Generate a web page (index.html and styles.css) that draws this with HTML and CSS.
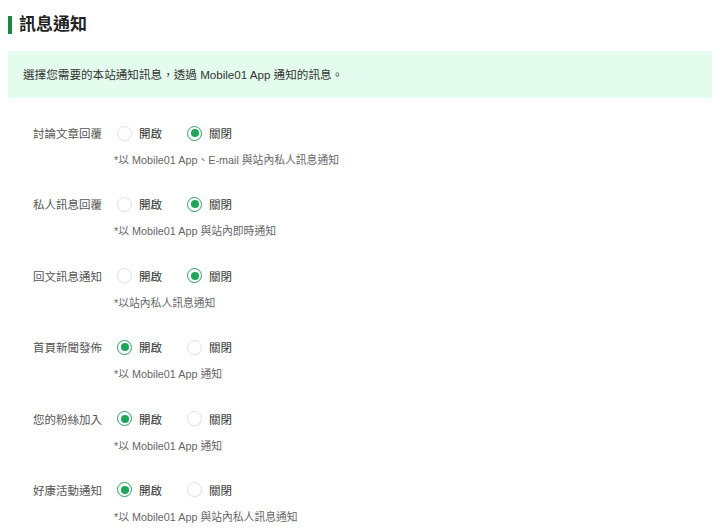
FILE: index.html
```html
<!DOCTYPE html>
<html lang="zh-Hant">
<head>
<meta charset="utf-8">
<title>訊息通知</title>
<link rel="stylesheet" href="styles.css">
</head>
<body>
<div class="page">
  <h1 class="title"><span class="title-bar"></span>訊息通知</h1>
  <div class="info">選擇您需要的本站通知訊息，透過 Mobile01 App 通知的訊息。</div>
  <div class="settings">
    <div class="setting">
      <div class="setting-main">
        <span class="setting-label">討論文章回覆</span>
        <label class="option"><span class="radio"></span>開啟</label>
        <label class="option"><span class="radio checked"></span>關閉</label>
      </div>
      <div class="setting-note">*以 Mobile01 App、E-mail 與站內私人訊息通知</div>
    </div>
    <div class="setting">
      <div class="setting-main">
        <span class="setting-label">私人訊息回覆</span>
        <label class="option"><span class="radio"></span>開啟</label>
        <label class="option"><span class="radio checked"></span>關閉</label>
      </div>
      <div class="setting-note">*以 Mobile01 App 與站內即時通知</div>
    </div>
    <div class="setting">
      <div class="setting-main">
        <span class="setting-label">回文訊息通知</span>
        <label class="option"><span class="radio"></span>開啟</label>
        <label class="option"><span class="radio checked"></span>關閉</label>
      </div>
      <div class="setting-note">*以站內私人訊息通知</div>
    </div>
    <div class="setting">
      <div class="setting-main">
        <span class="setting-label">首頁新聞發佈</span>
        <label class="option"><span class="radio checked"></span>開啟</label>
        <label class="option"><span class="radio"></span>關閉</label>
      </div>
      <div class="setting-note">*以 Mobile01 App 通知</div>
    </div>
    <div class="setting">
      <div class="setting-main">
        <span class="setting-label">您的粉絲加入</span>
        <label class="option"><span class="radio checked"></span>開啟</label>
        <label class="option"><span class="radio"></span>關閉</label>
      </div>
      <div class="setting-note">*以 Mobile01 App 通知</div>
    </div>
    <div class="setting">
      <div class="setting-main">
        <span class="setting-label">好康活動通知</span>
        <label class="option"><span class="radio checked"></span>開啟</label>
        <label class="option"><span class="radio"></span>關閉</label>
      </div>
      <div class="setting-note">*以 Mobile01 App 與站內私人訊息通知</div>
    </div>
  </div>
</div>
</body>
</html>
```

FILE: styles.css
```css
html, body {
  margin: 0;
  padding: 0;
  background: #fff;
}

body {
  font-family: "Liberation Sans", "Noto Sans CJK TC", sans-serif;
  color: #333;
}

.page {
  padding: 14px 8px 0;
}

.title {
  display: flex;
  align-items: center;
  margin: 0;
  height: 22px;
  font-size: 17px;
  line-height: 22px;
  font-weight: bold;
  color: #222;
}

.title-bar {
  width: 4px;
  height: 18px;
  background: #1d8543;
  margin-right: 7px;
}

.info {
  margin-top: 15px;
  background: #e3fced;
  padding: 15px 15px;
  font-size: 11.6px;
  line-height: 17px;
  color: #333;
}

.settings {
  display: flex;
  flex-direction: column;
  gap: 25.4px;
  margin-top: 25px;
  padding-left: 25px;
}

.setting-main {
  display: flex;
  align-items: center;
  height: 20px;
  font-size: 11.5px;
}

.setting-label {
  width: 84px;
  color: #555;
}

.option {
  display: flex;
  align-items: center;
  gap: 7px;
  margin-right: 25px;
  color: #333;
}

.radio {
  box-sizing: border-box;
  width: 15px;
  height: 15px;
  border-radius: 50%;
  border: 1px solid #e2e2e2;
  background: #fff;
  box-shadow: 0 1px 1px rgba(0, 0, 0, 0.04);
  display: flex;
  align-items: center;
  justify-content: center;
}

.radio.checked {
  border-color: #2aa361;
}

.radio.checked::after {
  content: "";
  width: 8px;
  height: 8px;
  border-radius: 50%;
  background: #1ea55a;
}

.setting-note {
  margin-top: 9px;
  margin-left: 81px;
  font-size: 10.8px;
  line-height: 17px;
  color: #666;
}
```
